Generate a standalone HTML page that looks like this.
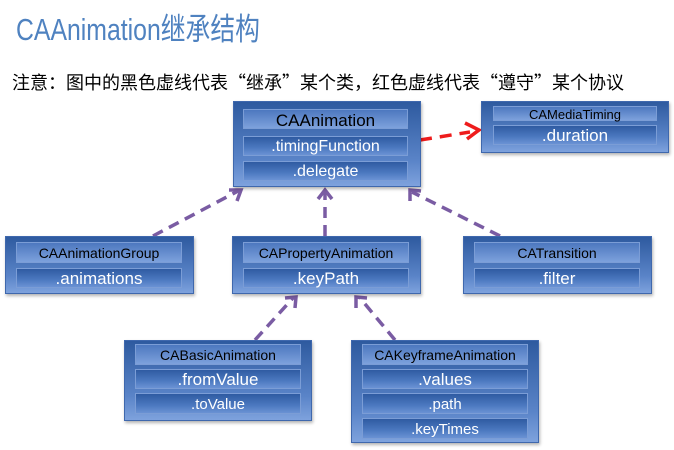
<!DOCTYPE html>
<html><head><meta charset="utf-8"><style>
body{margin:0;width:674px;height:450px;background:#fff;position:relative;overflow:hidden;font-family:"Liberation Sans","Noto Sans CJK SC",sans-serif}
.t{position:absolute;left:16px;top:4px;font-size:31px;color:#4f82c0;white-space:nowrap;transform:scaleX(0.8);transform-origin:0 0}
.n{position:absolute;left:12px;top:70px;font-size:18px;color:#000;white-space:nowrap;font-family:"Noto Sans CJK SC",sans-serif;line-height:24px}
.b{position:absolute;box-sizing:border-box;border:1px solid #3f68ad;background:linear-gradient(#2e5a9f,#5a84c8 70%,#7ea2dd);box-shadow:1px 2px 3px rgba(0,0,0,.3)}
.r{position:absolute;box-sizing:border-box;border:1px solid #7b9dd6;background:linear-gradient(#2f5ba2,#4c79c0 60%,#6a92d4);color:#fff;text-align:center;white-space:nowrap;font-size:17px}
.r.h{background:linear-gradient(#4d78bf,#7da1dc);color:#000;font-size:14px}
svg{position:absolute;left:0;top:0}
</style></head><body>
<div class="t">CAAnimation继承结构</div>
<div class="n">注意：图中的黑色虚线代表“继承”某个类，红色虚线代表“遵守”某个协议</div>
<svg width="674" height="450">
<g stroke="#7a5ca3" stroke-width="3.5" fill="none" stroke-dasharray="11,7">
<line x1="153" y1="236" x2="240" y2="190"/>
<line x1="325" y1="236" x2="325" y2="192"/>
<line x1="500" y1="236" x2="412" y2="192"/>
<line x1="255" y1="340" x2="293" y2="298"/>
<line x1="395" y1="340" x2="360" y2="298"/>
</g>
<g stroke="#7a5ca3" stroke-width="3.5" fill="none">
<path d="M229 190 L241 190 L237 201"/>
<path d="M318 199 L325 190 L332 199"/>
<path d="M410 201 L410 190 L421 191"/>
<path d="M285 298 L296 297 L295 308"/>
<path d="M356 308 L356 297 L367 298"/>
</g>
<line x1="420" y1="140" x2="470" y2="132" stroke="#ee1c1c" stroke-width="3.5" stroke-dasharray="12,8"/>
<path d="M465 123 L479 130 L467 139" stroke="#ee1c1c" stroke-width="3.5" fill="none"/>
</svg>

<div class="b" style="left:233px;top:101px;width:188px;height:86px"></div>
<div class="r h" style="left:243px;top:109px;width:165px;height:20px;font-size:17px;line-height:21px">CAAnimation</div>
<div class="r" style="left:243px;top:136px;width:165px;height:20px;font-size:16px;line-height:20px">.timingFunction</div>
<div class="r" style="left:243px;top:161px;width:165px;height:20px;font-size:16px;line-height:20px">.delegate</div>

<div class="b" style="left:481px;top:101px;width:188px;height:52px"></div>
<div class="r h" style="left:493px;top:106px;width:164px;height:15px;font-size:13px;line-height:15px">CAMediaTiming</div>
<div class="r" style="left:493px;top:125px;width:164px;height:20px;font-size:17px;line-height:20px">.duration</div>

<div class="b" style="left:5px;top:236px;width:189px;height:58px"></div>
<div class="r h" style="left:16px;top:242px;width:166px;height:21px;line-height:21px">CAAnimationGroup</div>
<div class="r" style="left:16px;top:268px;width:166px;height:20px;line-height:20px">.animations</div>

<div class="b" style="left:232px;top:236px;width:189px;height:58px"></div>
<div class="r h" style="left:243px;top:242px;width:166px;height:21px;line-height:21px">CAPropertyAnimation</div>
<div class="r" style="left:243px;top:268px;width:166px;height:20px;line-height:20px">.keyPath</div>

<div class="b" style="left:463px;top:236px;width:189px;height:58px"></div>
<div class="r h" style="left:474px;top:242px;width:166px;height:21px;line-height:21px">CATransition</div>
<div class="r" style="left:474px;top:268px;width:166px;height:20px;line-height:20px">.filter</div>

<div class="b" style="left:124px;top:340px;width:188px;height:81px"></div>
<div class="r h" style="left:135px;top:344px;width:166px;height:21px;line-height:21px">CABasicAnimation</div>
<div class="r" style="left:135px;top:369px;width:166px;height:20px;line-height:20px">.fromValue</div>
<div class="r" style="left:135px;top:393px;width:166px;height:21px;font-size:15px;line-height:21px">.toValue</div>

<div class="b" style="left:351px;top:340px;width:188px;height:103px"></div>
<div class="r h" style="left:362px;top:344px;width:166px;height:21px;line-height:21px">CAKeyframeAnimation</div>
<div class="r" style="left:362px;top:369px;width:166px;height:20px;line-height:20px">.values</div>
<div class="r" style="left:362px;top:393px;width:166px;height:21px;font-size:15px;line-height:21px">.path</div>
<div class="r" style="left:362px;top:418px;width:166px;height:21px;font-size:15px;line-height:21px">.keyTimes</div>
</body></html>
